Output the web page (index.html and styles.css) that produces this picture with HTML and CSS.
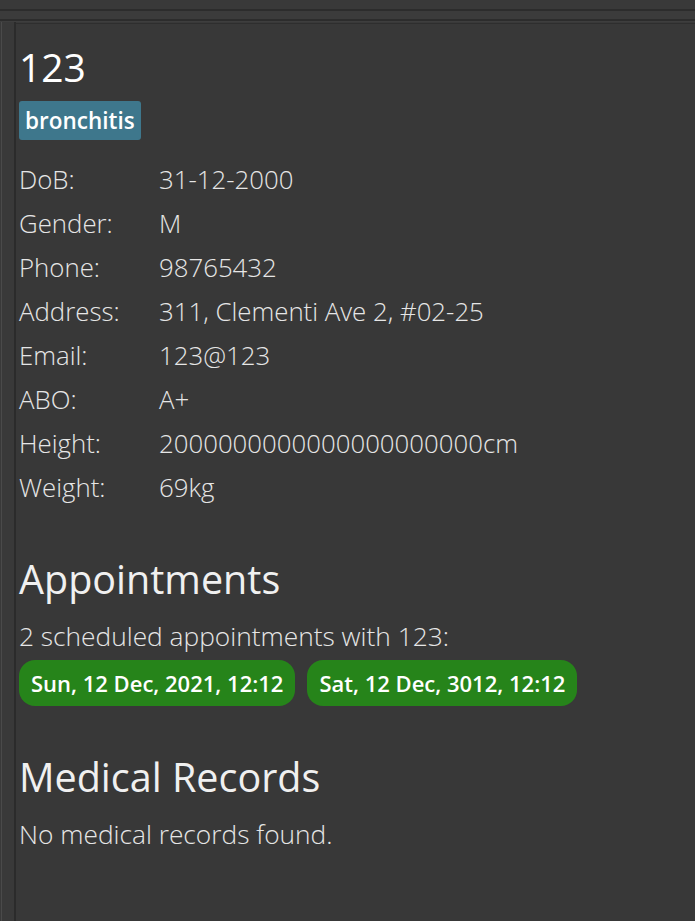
FILE: index.html
```html
<!DOCTYPE html>
<html>
<head>
<meta charset="utf-8">
<link rel="stylesheet" href="styles.css">
</head>
<body>
<div class="topbar"></div>
<div class="subbar"></div>
<div class="main">
  <div class="rail"></div>
  <div class="panel">
    <h1 class="name">123</h1>
    <div class="tags"><span class="tag">bronchitis</span></div>
    <div class="details">
      <div class="row"><span class="label">DoB:</span><span class="value">31-12-2000</span></div>
      <div class="row"><span class="label">Gender:</span><span class="value">M</span></div>
      <div class="row"><span class="label">Phone:</span><span class="value">98765432</span></div>
      <div class="row"><span class="label">Address:</span><span class="value">311, Clementi Ave 2, #02-25</span></div>
      <div class="row"><span class="label">Email:</span><span class="value">123@123</span></div>
      <div class="row"><span class="label">ABO:</span><span class="value">A+</span></div>
      <div class="row"><span class="label">Height:</span><span class="value">2000000000000000000000cm</span></div>
      <div class="row"><span class="label">Weight:</span><span class="value">69kg</span></div>
    </div>
    <h2 class="section">Appointments</h2>
    <p class="text">2 scheduled appointments with 123:</p>
    <div class="chips">
      <span class="chip">Sun, 12 Dec, 2021, 12:12</span>
      <span class="chip">Sat, 12 Dec, 3012, 12:12</span>
    </div>
    <h2 class="section records">Medical Records</h2>
    <p class="text">No medical records found.</p>
  </div>
</div>
</body>
</html>
```
FILE: styles.css
```css
html, body {
  margin: 0;
  padding: 0;
  height: 100%;
  background: #393939;
  overflow: hidden;
}
body {
  font-family: "Open Sans", "Noto Sans", sans-serif;
  color: #e6e6e6;
  display: flex;
  flex-direction: column;
}
.topbar {
  height: 9px;
  border-bottom: 2px solid #2c2c2c;
  background: #393939;
  flex: none;
}
.subbar {
  height: 8px;
  border-bottom: 2px solid #2c2c2c;
  background: #3b3b3b;
  flex: none;
}
.main {
  flex: 1;
  display: flex;
  border-top: 1px solid #3e3e3e;
}
.rail {
  width: 12px;
  border-left: 1px solid #4a4a4a;
  border-right: 2px solid #2b2b2b;
  margin-left: 1px;
  background: #393939;
}
.panel {
  flex: 1;
  border-top: 1px solid #2e2e2e;
  margin-top: 1px;
  padding: 19px 0 0 3px;
  background: #383838;
}
.name {
  margin: 0;
  font-weight: 400;
  font-size: 39px;
  line-height: 48px;
  color: #ffffff;
}
.tags {
  display: flex;
  margin-top: 10px;
}
.tag {
  background: #3e778c;
  color: #ffffff;
  font-weight: 600;
  font-size: 22.5px;
  line-height: 39px;
  padding: 0 6px;
  border-radius: 3px;
}
.details {
  margin-top: 17px;
}
.row {
  display: flex;
  height: 44px;
  align-items: center;
  font-weight: 300;
  font-size: 25.8px;
}
.label {
  width: 140px;
}
.section {
  margin: 45px 0 0;
  font-weight: 400;
  font-size: 39.5px;
  line-height: 50px;
  color: #f0f0f0;
}
.text {
  margin: 15px 0 0;
  font-weight: 300;
  font-size: 26.3px;
  line-height: 34px;
}
.chips {
  display: flex;
  gap: 12px;
  margin-top: 7px;
}
.chip {
  background: #26841a;
  color: #ffffff;
  font-weight: 600;
  font-size: 22px;
  line-height: 46px;
  padding: 0 12px;
  border-radius: 16px;
}
.records {
  margin-top: 46px;
}
```
